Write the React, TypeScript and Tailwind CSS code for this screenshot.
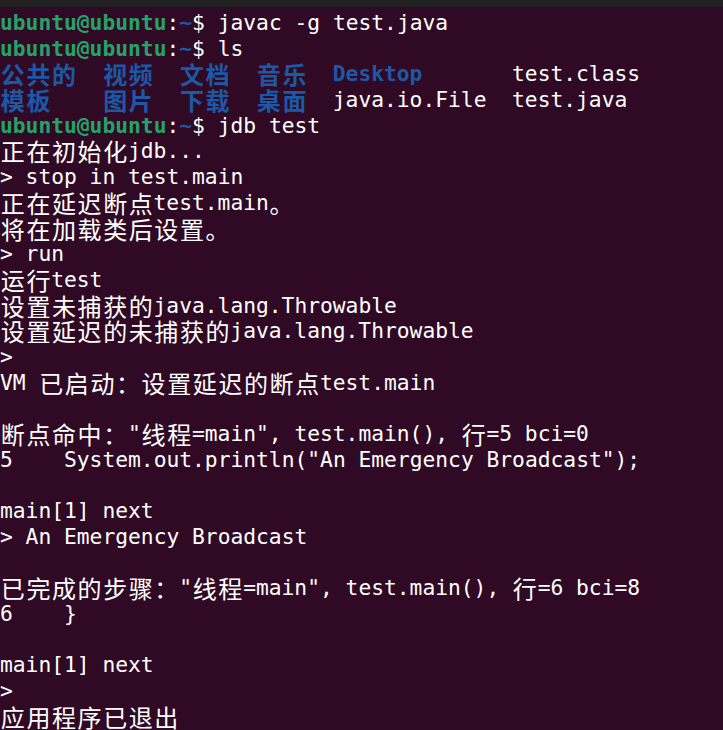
import React from "react";

type Seg = { t: string; c?: "g" | "b" | "w"; bold?: boolean };

const isWide = (ch: string) => /[\u2E80-\u9FFF\u3000-\u303F\uFF00-\uFFEF]/.test(ch);

function Txt({ s }: { s: string }) {
  const out: React.ReactNode[] = [];
  let run = "";
  Array.from(s).forEach((ch, i) => {
    if (isWide(ch)) {
      if (run) {
        out.push(run);
        run = "";
      }
      out.push(
        <span
          key={i}
          className="inline-block w-[25.6px] h-[25.7px] align-top text-center text-[24px] leading-[25.7px] font-['Noto_Sans_CJK_SC',sans-serif]"
        >
          {ch}
        </span>
      );
    } else {
      run += ch;
    }
  });
  if (run) out.push(run);
  return <>{out}</>;
}

const prompt = (cmd: string): Seg[] => [
  { t: "ubuntu@ubuntu", c: "g", bold: true },
  { t: ":" },
  { t: "~", c: "b", bold: true },
  { t: "$ " + cmd },
];

const lines: Seg[][] = [
  prompt("javac -g test.java"),
  prompt("ls"),
  [
    { t: "公共的  视频  文档  音乐  Desktop", c: "b", bold: true },
    { t: "       test.class" },
  ],
  [
    { t: "模板    图片  下载  桌面", c: "b", bold: true },
    { t: "  java.io.File  test.java" },
  ],
  prompt("jdb test"),
  [{ t: "正在初始化jdb..." }],
  [{ t: "> stop in test.main" }],
  [{ t: "正在延迟断点test.main。" }],
  [{ t: "将在加载类后设置。" }],
  [{ t: "> run" }],
  [{ t: "运行test" }],
  [{ t: "设置未捕获的java.lang.Throwable" }],
  [{ t: "设置延迟的未捕获的java.lang.Throwable" }],
  [{ t: ">" }],
  [{ t: "VM 已启动：设置延迟的断点test.main" }],
  [],
  [{ t: "断点命中：\"线程=main\", test.main(), 行=5 bci=0" }],
  [{ t: "5    System.out.println(\"An Emergency Broadcast\");" }],
  [],
  [{ t: "main[1] next" }],
  [{ t: "> An Emergency Broadcast" }],
  [],
  [{ t: "已完成的步骤：\"线程=main\", test.main(), 行=6 bci=8" }],
  [{ t: "6    }" }],
  [],
  [{ t: "main[1] next" }],
  [{ t: ">" }],
  [{ t: "应用程序已退出" }],
];

const colorOf = (c?: Seg["c"]) =>
  c === "g" ? "text-[#26a269]" : c === "b" ? "text-[#1b58a6]" : "text-white";

export default function App() {
  return (
    <div className="w-[723px] h-[730px] overflow-hidden bg-[#300a24] flex flex-col">
      <div className="h-[7px] bg-[#222222] shrink-0"></div>
      <div className="pt-[3px] font-['DejaVu_Sans_Mono',monospace] text-[21.27px] leading-[25.7px] text-white">
        {lines.map((line, i) => (
          <div key={i} className="h-[25.7px] whitespace-pre">
            {line.map((seg, j) => (
              <span key={j} className={`${colorOf(seg.c)} ${seg.bold ? "font-bold" : "font-normal"}`}>
                <Txt s={seg.t} />
              </span>
            ))}
          </div>
        ))}
      </div>
    </div>
  );
}
